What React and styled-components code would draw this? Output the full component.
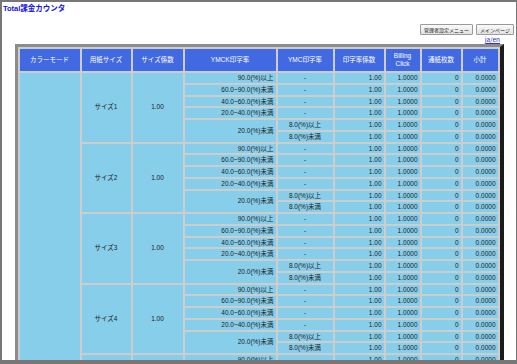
import React from 'react'
import styled, { createGlobalStyle } from 'styled-components'

const GlobalStyle = createGlobalStyle`
  html, body {
    margin: 0;
    padding: 0;
    background: #fff;
  }
  body {
    font-family: "Liberation Sans", "Noto Sans CJK JP", sans-serif;
  }
`

const Frame = styled.div`
  width: 517px;
  height: 364px;
  box-sizing: border-box;
  border-style: solid;
  border-color: #777;
  border-width: 2px 1px 4px 2px;
  overflow: hidden;
  background: #fff;
`

const Title = styled.div`
  height: 20px;
  box-sizing: border-box;
  padding: 1px 0 0 1px;
  font-size: 7.5px;
  line-height: 12px;
  font-weight: bold;
  color: #1414e6;
`

const Toolbar = styled.div`
  display: flex;
  justify-content: flex-end;
  gap: 3px;
  margin-top: 2px;
  padding-right: 2px;
  height: 11px;
`

const MenuButton = styled.button`
  height: 11px;
  margin: 0;
  padding: 0 3px;
  border: 1px solid #9a9a9a;
  border-radius: 1px;
  background: linear-gradient(#fbfbfb, #e2e2e2);
  font-family: "Noto Sans CJK JP", sans-serif;
  font-size: 5px;
  line-height: 9px;
  color: #111;
`

const LangRow = styled.div`
  height: 9px;
  padding-right: 16px;
  text-align: right;
  font-family: "Noto Sans CJK JP", sans-serif;
  font-size: 6.5px;
  line-height: 9px;
`

const LangLink = styled.a`
  color: #3030cc;
  text-decoration: underline;
`

const Table = styled.table`
  margin: 0 auto;
  table-layout: fixed;
  border-collapse: separate;
  border-spacing: 2px;
  background: #cdcdcd;
  border-style: solid;
  border-width: 3px 4px 3px 3px;
  border-color: #8c8c8c #1c1c1c #1c1c1c #8c8c8c;
`

const Th = styled.th`
  height: 22px;
  padding: 0;
  background: #4169e1;
  color: #fff;
  font-weight: normal;
  font-size: 6.5px;
  line-height: 8px;
  text-align: center;
  vertical-align: middle;
`

const Td = styled.td`
  padding: 0 2px;
  background: #87ceeb;
  color: #222;
  font-size: 6.5px;
  line-height: 9.75px;
  white-space: nowrap;
  overflow: hidden;
  text-align: ${p => p.$align || 'right'};
  vertical-align: middle;
`

const widths = [60, 49, 50, 91, 55, 49, 34, 39, 35]

const bands = [
  '90.0(%)以上',
  '60.0~90.0(%)未満',
  '40.0~60.0(%)未満',
  '20.0~40.0(%)未満',
]

const sizes = ['サイズ1', 'サイズ2', 'サイズ3', 'サイズ4', 'サイズ5']

const Figures = () => (
  <>
    <Td>1.00</Td>
    <Td>1.0000</Td>
    <Td>0</Td>
    <Td>0.0000</Td>
  </>
)

const SizeGroup = ({ name, first }) => (
  <>
    {bands.map((band, i) => (
      <tr key={band}>
        {first && i === 0 && <Td rowSpan={sizes.length * 6} />}
        {i === 0 && (
          <>
            <Td rowSpan={6} $align="center">{name}</Td>
            <Td rowSpan={6} $align="center">1.00</Td>
          </>
        )}
        <Td>{band}</Td>
        <Td $align="center">-</Td>
        <Figures />
      </tr>
    ))}
    <tr>
      <Td rowSpan={2}>20.0(%)未満</Td>
      <Td $align="center">8.0(%)以上</Td>
      <Figures />
    </tr>
    <tr>
      <Td $align="center">8.0(%)未満</Td>
      <Figures />
    </tr>
  </>
)

const App = () => (
  <Frame>
    <GlobalStyle />
    <Title>Total課金カウンタ</Title>
    <Toolbar>
      <MenuButton>管理者設定メニュー</MenuButton>
      <MenuButton>メインページ</MenuButton>
    </Toolbar>
    <LangRow>
      <LangLink href="#">ja/en</LangLink>
    </LangRow>
    <Table>
      <colgroup>
        {widths.map((w, i) => (
          <col key={i} style={{ width: w }} />
        ))}
      </colgroup>
      <thead>
        <tr>
          <Th>カラーモード</Th>
          <Th>用紙サイズ</Th>
          <Th>サイズ係数</Th>
          <Th>YMCK印字率</Th>
          <Th>YMC印字率</Th>
          <Th>印字率係数</Th>
          <Th>Billing<br />Click</Th>
          <Th>通紙枚数</Th>
          <Th>小計</Th>
        </tr>
      </thead>
      <tbody>
        {sizes.map((s, i) => (
          <SizeGroup key={s} name={s} first={i === 0} />
        ))}
      </tbody>
    </Table>
  </Frame>
)

export default App
